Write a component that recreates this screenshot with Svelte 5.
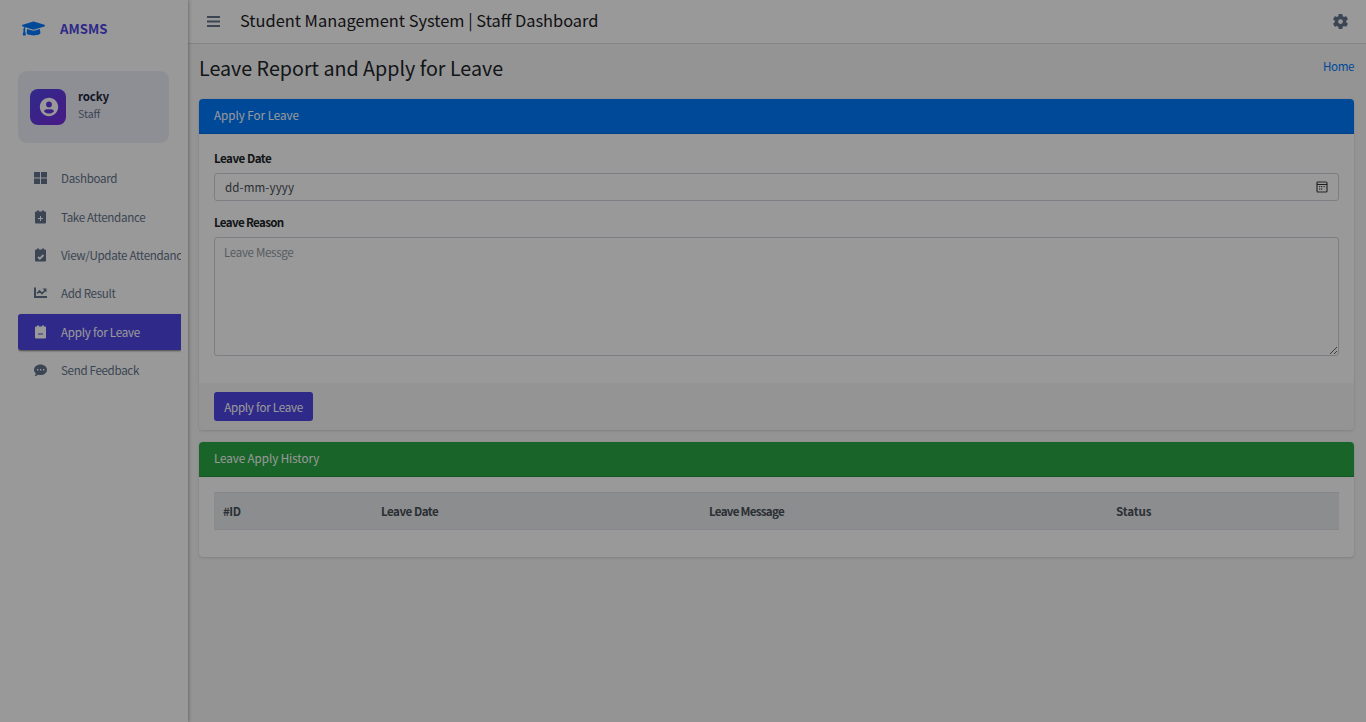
<script>
  const items = [
    { label: 'Dashboard', icon: 'grid' },
    { label: 'Take Attendance', icon: 'plus' },
    { label: 'View/Update Attendance', icon: 'check' },
    { label: 'Add Result', icon: 'chart' },
    { label: 'Apply for Leave', icon: 'minus', active: true },
    { label: 'Send Feedback', icon: 'chat' }
  ];
</script>

<div class="app">
  <aside>
    <div class="brand">
      <svg width="23" height="19" viewBox="0 0 640 512"><path fill="#007bff" d="M622.34 153.2L343.4 67.5c-15.2-4.67-31.6-4.67-46.79 0L17.66 153.2c-23.54 7.23-23.54 38.36 0 45.59l48.63 14.94c-10.67 13.19-17.23 29.28-17.88 46.9C38.78 266.15 32 276.11 32 288c0 10.78 5.68 19.85 13.86 25.65L20.33 428.53C18.11 438.52 25.71 448 35.94 448h56.11c10.24 0 17.84-9.48 15.62-19.47L82.14 313.65C90.32 307.85 96 298.78 96 288c0-11.57-6.47-21.25-15.66-26.87.76-15.02 8.44-28.3 20.69-36.72L296.6 284.5c9.06 2.78 26.44 6.25 46.79 0l278.95-85.7c23.55-7.24 23.55-38.36 0-45.6zM352.79 315.09c-28.53 8.76-52.84 3.92-65.59 0l-145.02-44.55L128 384c0 35.35 85.96 64 192 64s192-28.65 192-64l-14.18-113.47-145.03 44.56z" /></svg>
      <span>AMSMS</span>
    </div>
    <div class="user">
      <div class="avatar">
        <svg width="22" height="22" viewBox="0 0 24 24"><path fill="#fff" d="M12 2C6.579 2 2 6.579 2 12s4.579 10 10 10 10-4.579 10-10S17.421 2 12 2zm0 4c1.9 0 3.2 1.4 3.2 3.2s-1.3 3.3-3.2 3.3-3.2-1.5-3.2-3.3S10.100 6 12 6zm-5.500 10.500c.7-1.400 2-2 3.500-2h4c1.500 0 2.800.6 3.500 2C16.200 18.200 14.015 19 12 19s-4.200-.8-5.500-2.500z" /></svg>
      </div>
      <div class="who"><b>rocky</b><span>Staff</span></div>
    </div>
    <nav>
      {#each items as item}
        <a class:active={item.active} href="#top">
          <svg width="15" height="15" viewBox="0 0 15 15">
            {#if item.icon === 'grid'}
              <path fill="currentColor" d="M1 0h6v5.500H1zM8 0h6v5.500H8zM1 6.500h6V12H1zM8 6.500h6V12H8z" />
            {:else if item.icon === 'chart'}
              <path fill="none" stroke="currentColor" stroke-width="2" d="M2 1.500V11h12" />
              <path fill="none" stroke="currentColor" stroke-width="1.600" d="M4 7.500 6.500 5l2.500 2.500L12.500 4" />
              <path fill="currentColor" d="M9.500 2.500H13.500V6.500z" />
            {:else if item.icon === 'chat'}
              <path fill="currentColor" d="M7.500 1.500C3.900 1.500 1 3.900 1 6.800c0 1.500.7 2.700 1.800 3.700 0 1-.7 1.900-1.500 2.700 1.500 0 2.900-.6 3.800-1.400.8.2 1.500.3 2.400.3 3.600 0 6.500-2.400 6.500-5.300S11.100 1.500 7.500 1.500z" />
              <path fill="#fff" d="M4 6h1.300v1.400H4zM7 6h1.300v1.400H7zM10 6h1.300v1.400H10z" />
            {:else}
              <path fill="currentColor" d="M2 2.500q0-1 1-1h1v-1h2v1h3v-1h2v1h1q1 0 1 1v10q0 1-1 1H3q-1 0-1-1z" />
              {#if item.icon === 'plus'}
                <path stroke="#fff" d="M7.500 6v5M5 8.500h5" />
              {:else if item.icon === 'check'}
                <path fill="none" stroke="#fff" stroke-width="1.800" d="M5 9l1.800 1.700L10.500 7" />
              {:else}
                <path stroke="#4f46e5" d="M5 9h5" />
              {/if}
            {/if}
          </svg>
          <span>{item.label}</span>
        </a>
      {/each}
    </nav>
  </aside>

  <div class="page">
    <header>
      <svg class="bars" width="13" height="12" viewBox="0 0 13 12"><path fill="#64748b" d="M0 0h13v2H0zM0 4.500h13v2H0zM0 9h13v2H0z" /></svg>
      <span class="title">Student Management System | Staff Dashboard</span>
      <svg class="cog" width="19" height="19" viewBox="0 0 24 24"><path fill="#64748b" d="M19.140 12.940c.04-.3.060-.61.060-.94s-.02-.64-.07-.94l2.030-1.580c.18-.14.230-.41.120-.61l-1.920-3.320c-.12-.22-.37-.29-.59-.22l-2.390.96c-.5-.38-1.030-.7-1.620-.94L14.400 2.810c-.04-.24-.24-.41-.48-.41h-3.840c-.24 0-.43.170-.47.410L9.250 5.350c-.59.240-1.130.570-1.620.94l-2.390-.96c-.22-.08-.47 0-.59.220L2.740 8.870c-.12.210-.08.470.12.610l2.030 1.580c-.05.300-.09.630-.09.940s.02.640.070.940l-2.030 1.580c-.18.140-.23.410-.12.610l1.920 3.320c.12.220.370.290.590.220l2.390-.96c.5.380 1.030.700 1.620.94l.36 2.540c.05.240.240.410.480.410h3.840c.24 0 .44-.17.470-.41l.36-2.540c.59-.24 1.130-.56 1.620-.94l2.390.96c.22.080.470 0 .59-.22l1.920-3.320c.12-.22.070-.47-.12-.61l-2.010-1.580zM12 15a3 3 0 1 1 0-6 3 3 0 0 1 0 6z" /></svg>
    </header>
    <div class="heading">
      <h1>Leave Report and Apply for Leave</h1>
      <a href="#top">Home</a>
    </div>
    <main>
      <section class="card">
        <h3 class="blue">Apply For Leave</h3>
        <div class="form">
          <div class="label">Leave Date</div>
          <div class="date">
            <span>dd-mm-yyyy</span>
            <svg width="12" height="12" viewBox="0 0 12 12"><rect x="1" y="1" width="10" height="10" rx="1" fill="none" stroke="#444" stroke-width="1.200" /><path stroke="#333" d="M1 3.500h10" /><path fill="#555" d="M5 5h1.300v1.300H5zM7.500 5h1.300v1.300H7.500zM3 7.400h1.300v1.300H3zM5 7.400h1.300v1.300H5zM3 5h1.300v1.300H3z" /></svg>
          </div>
          <div class="label second">Leave Reason</div>
          <textarea placeholder="Leave Messge"></textarea>
        </div>
        <div class="foot"><button>Apply for Leave</button></div>
      </section>
      <section class="card history">
        <h3 class="green">Leave Apply History</h3>
        <div class="body">
          <div class="thead">
            <span>#ID</span><span>Leave Date</span><span class="tight">Leave Message</span><span class="wide">Status</span>
          </div>
        </div>
      </section>
    </main>
  </div>
  <div class="backdrop"></div>
</div>

<style>
  :global(body) { margin: 0; overflow: hidden; }
  * { box-sizing: border-box; }
  .app { display: flex; height: 722px; font-family: 'Noto Sans CJK SC', 'Noto Sans', sans-serif; font-size: 11.6px; line-height: 18px; color: #212529; background: #f7f7f8; white-space: nowrap; }
  a { text-decoration: none; }
  svg { flex: none; display: block; }
  .backdrop { position: fixed; inset: 0; z-index: 5; background: rgba(0, 0, 0, 0.4); }

  aside { width: 188px; flex: none; background: #fff; padding-left: 18px; box-shadow: 0 0 4px rgba(0, 0, 0, 0.45); z-index: 1; }
  .brand { display: flex; align-items: center; height: 57px; padding-left: 4px; gap: 15px; font-size: 13.200px; font-weight: 700; color: #4f46e5; }
  .user { display: flex; align-items: center; width: 151px; height: 72px; margin-top: 14px; padding-left: 12px; gap: 12px; border-radius: 9px; background: #ededf8; }
  .avatar { display: flex; align-items: center; justify-content: center; width: 36px; height: 36px; padding-left: 1px; border-radius: 8px; background: linear-gradient(135deg, #4f46e5, #7c2be0); }
  .who { display: flex; flex-direction: column; line-height: 17px; padding-bottom: 5px; }
  .who b { color: #1e293b; letter-spacing: -0.2px; }
  .who span { color: #64748b; font-size: 10.500px; }
  nav { display: flex; flex-direction: column; gap: 2.300px; margin-top: 18px; width: 163px; overflow: hidden; padding-bottom: 5px; }
  nav a { display: flex; align-items: center; height: 36px; padding-left: 15px; gap: 13px; color: #64748b; border-radius: 3px 0 0 3px; letter-spacing: -0.330px; }
  nav a span { padding-bottom: 1.300px; }
  nav a.active { background: #4f46e5; color: #fff; box-shadow: 0 1px 2px rgba(0, 0, 0, 0.5); letter-spacing: -0.230px; }

  .page { flex: 1; min-width: 0; }
  header { display: flex; align-items: center; height: 44px; padding: 0 16px 0 18px; background: #fff; border-bottom: 1px solid #dcdcdc; }
  .title { margin-left: 21px; font-size: 16.420px; line-height: 24px; padding-bottom: 3px; color: #1d2024; }
  .cog { margin-left: auto; }
  .bars { margin-left: 1px; margin-right: -1px; }
  .heading { display: flex; justify-content: space-between; height: 55px; padding: 9px 12px 0 11px; }
  h1 { margin: 0; font-size: 19.700px; font-weight: 400; line-height: 29px; }
  .heading a { color: #007bff; line-height: 27px; letter-spacing: -0.400px; }
  main { padding: 0 12px 0 11px; }
  .card { border-radius: 4px; background: #fff; overflow: hidden; box-shadow: 0 1px 3px rgba(0, 0, 0, 0.13), 0 0 1px rgba(0, 0, 0, 0.1); }
  h3 { margin: 0; height: 35px; padding: 0 15px; font-size: 11.600px; font-weight: 400; line-height: 33px; color: #fff; border-bottom: 1px solid rgba(0, 0, 0, 0.125); }
  .blue { background: #007bff; }
  .green { background: #28a745; letter-spacing: -0.050px; }
  .form { height: 249px; padding: 15px 15px 0; }
  .label { font-weight: 700; height: 24px; letter-spacing: -0.500px; }
  .second { margin-top: 12px; letter-spacing: -0.660px; }
  .date { display: flex; align-items: center; justify-content: space-between; height: 28px; padding: 0 10px; border: 1px solid #ced4da; border-radius: 3px; color: #495057; letter-spacing: 0.100px; }
  textarea { display: block; width: 100%; height: 119px; padding: 5px 9px; border: 1px solid #ced4da; border-radius: 3px; font: inherit; letter-spacing: -0.330px; resize: vertical; outline: none; background: #fff; }
  textarea::placeholder { color: #939ba2; }
  .foot { height: 47px; padding: 9px 15px; background: #f7f7f7; }
  button { display: block; width: 99px; height: 29px; padding: 0; border: 0; border-radius: 3px; background: #4f46e5; color: #fff; font: inherit; letter-spacing: -0.250px; }
  .history { margin-top: 12px; height: 115px; }
  .body { padding: 15px; }
  .thead { display: grid; grid-template-columns: 158px 328px 407px 1fr; height: 38px; padding-left: 9px; border: solid #dee2e6; border-width: 1px 0; background: #e9ecef; font-weight: 700; color: #495057; line-height: 36px; letter-spacing: -0.500px; }
  .tight { letter-spacing: -0.720px; }
  .wide { letter-spacing: -0.150px; }
</style>
